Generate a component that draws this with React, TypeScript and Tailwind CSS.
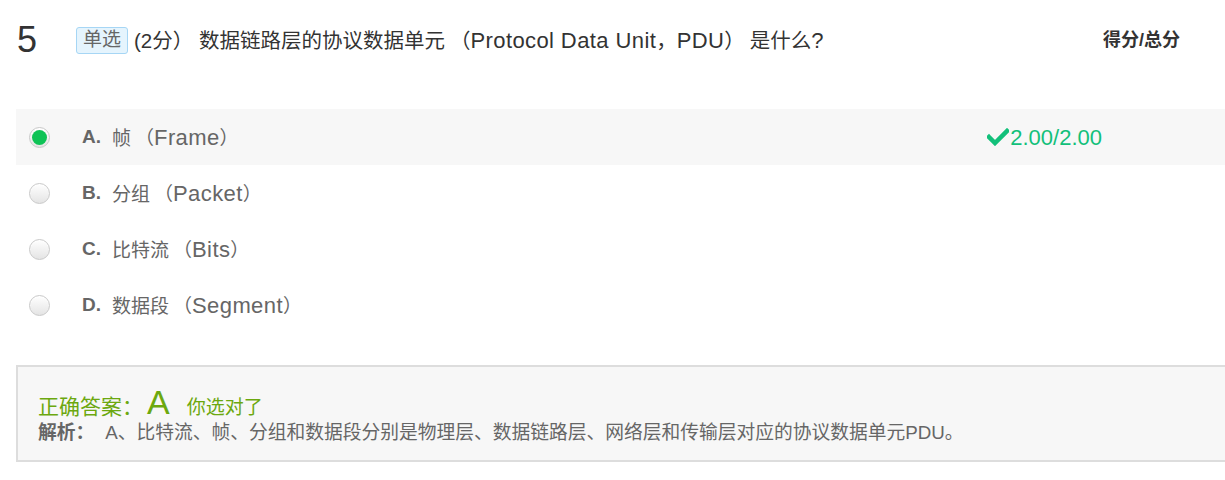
import React from 'react';

const options = [
  { key: 'A', cjk: '帧', latin: 'Frame', checked: true },
  { key: 'B', cjk: '分组', latin: 'Packet', checked: false },
  { key: 'C', cjk: '比特流', latin: 'Bits', checked: false },
  { key: 'D', cjk: '数据段', latin: 'Segment', checked: false },
];

const Radio: React.FC<{ checked: boolean }> = ({ checked }) => (
  <span className="flex h-[21px] w-[21px] items-center justify-center rounded-full border border-[#c9c9c9] bg-gradient-to-b from-[#ffffff] to-[#e4e4e4] shadow-[inset_0_1px_1px_rgba(255,255,255,0.9)]">
    {checked && <span className="h-[15px] w-[15px] rounded-full bg-[#0fc356]" />}
  </span>
);

const CheckMark: React.FC = () => (
  <svg width="22" height="18" viewBox="0 0 22 18" className="mr-[1px]">
    <path d="M2 9 L8 15 L20 3" fill="none" stroke="#12c07a" strokeWidth="4.5" strokeLinecap="square" />
  </svg>
);

export default function App() {
  return (
    <div className="min-h-[480px] w-full bg-white pl-4 pt-[21px] font-['Liberation_Sans','Noto_Sans_CJK_SC',sans-serif]">
      {/* header */}
      <div className="flex h-[38px] items-center">
        <span className="w-[60px] pl-[1px] text-[36px] leading-none text-[#333]">5</span>
        <span className="flex h-[27px] items-center rounded-[3px] border border-[#a6d6f5] bg-[#e5f4fd] px-[6px] text-[19px] text-[#666]">
          单选
        </span>
        <span className="ml-[6px] whitespace-pre text-[20.5px] text-[#333]">
          (2分） 数据链路层的协议数据单元<span className="ml-[5px]">（</span>
          <span className="text-[22px] tracking-[0.4px]">Protocol Data Unit</span>，
          <span className="text-[22px] tracking-[0.4px]">PDU</span>
          <span className="mr-[5px]">）</span>是什么<span className="text-[22px]">?</span>
        </span>
        <span className="ml-auto mr-[45px] text-[18px] font-bold text-[#333]">得分/总分</span>
      </div>

      {/* options */}
      <div className="mt-[50px] flex flex-col">
        {options.map((o) => (
          <div
            key={o.key}
            className={`flex h-[56px] items-center pl-[13px] ${o.checked ? 'bg-[#f7f7f7]' : ''}`}
          >
            <Radio checked={o.checked} />
            <span className="ml-[32px] text-[19px] font-bold text-[#666]">{o.key}.</span>
            <span className="ml-[11px] text-[19px] text-[#666]">
              {o.cjk}
              <span className="ml-[4px]">（</span>
              <span className="text-[22px] tracking-[0.4px]">{o.latin}</span>）
            </span>
            {o.checked && (
              <span className="ml-auto mr-[123px] flex items-center text-[22px] text-[#12c07a]">
                <CheckMark />
                2.00/2.00
              </span>
            )}
          </div>
        ))}
      </div>

      {/* analysis */}
      <div className="mt-[32px] h-[97px] border-2 border-r-0 border-[#dddddd] bg-[#f7f7f7] px-5 pt-[17px]">
        <div className="flex items-baseline text-[#6ca80f]">
          <span className="text-[21px]">正确答案：</span>
          <span className="ml-[4px] text-[34px] leading-[36px]">A</span>
          <span className="ml-[17px] text-[19px]">你选对了</span>
        </div>
        <div className="mt-[-4px] flex items-baseline text-[18.75px] text-[#666]">
          <span className="font-bold">解析：</span>
          <span className="ml-[11px]">A、比特流、帧、分组和数据段分别是物理层、数据链路层、网络层和传输层对应的协议数据单元PDU。</span>
        </div>
      </div>
    </div>
  );
}
